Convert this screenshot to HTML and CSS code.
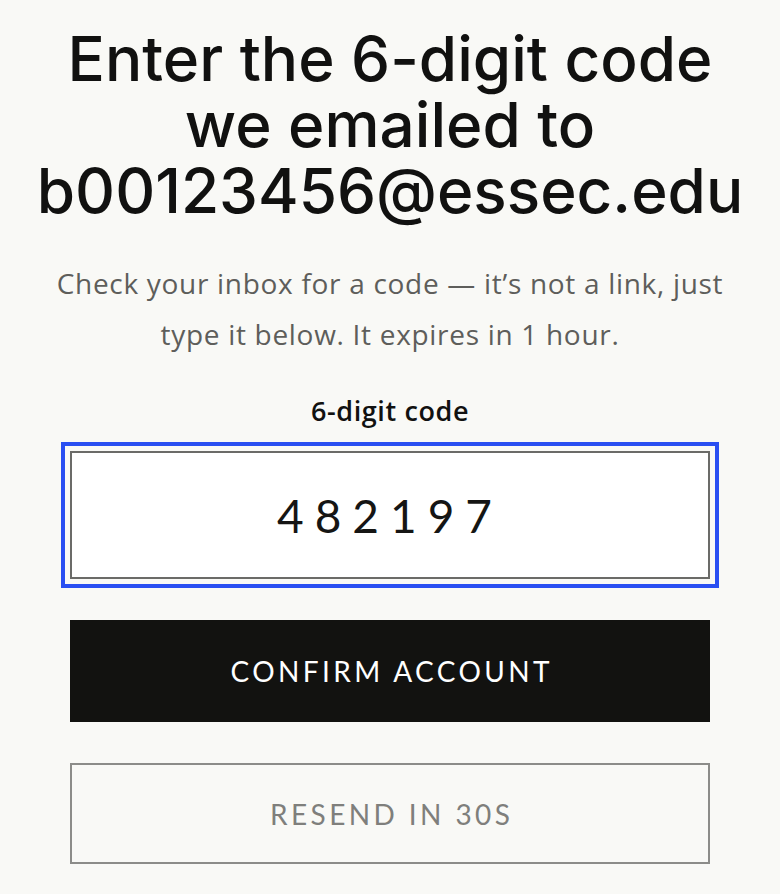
FILE: index.html
```html
<!DOCTYPE html>
<html lang="en">
<head>
<meta charset="utf-8">
<title>Enter code</title>
<link rel="stylesheet" href="styles.css">
</head>
<body>
<main class="page">
  <header class="intro">
    <h1 class="title">Enter the 6-digit code we emailed to b00123456@essec.edu</h1>
    <p class="lead">Check your inbox for a code — it’s not a link, just type it below. It expires in 1 hour.</p>
  </header>
  <form class="form">
    <label class="label" for="code">6-digit code</label>
    <input class="code is-focused" id="code" type="text" inputmode="numeric" value="482197">
    <button class="btn btn-primary" type="button">Confirm account</button>
    <button class="btn btn-secondary" type="button" disabled>Resend in 30s</button>
  </form>
</main>
</body>
</html>
```

FILE: styles.css
```css
html, body {
  margin: 0;
  padding: 0;
  background: #f9f9f6;
}
.page {
  display: flex;
  flex-direction: column;
  align-items: center;
  padding-top: 26px;
  font-family: "Open Sans", "Liberation Sans", sans-serif;
}
.intro {
  width: 740px;
  display: flex;
  flex-direction: column;
  align-items: center;
  text-align: center;
}
.title {
  margin: 0;
  max-width: 720px;
  font-family: "Inter", "Liberation Sans", sans-serif;
  font-weight: 500;
  font-size: 62px;
  line-height: 66px;
  letter-spacing: 0;
  color: #111110;
}
.lead {
  margin: 34px 0 0;
  max-width: 700px;
  font-size: 28px;
  line-height: 51px;
  letter-spacing: 0.7px;
  color: #5e5e5b;
}
.form {
  width: 640px;
  margin-top: 35px;
  display: flex;
  flex-direction: column;
  align-items: stretch;
}
.label {
  text-align: center;
  font-size: 27px;
  font-weight: 600;
  letter-spacing: 0.6px;
  color: #111110;
  line-height: 32px;
}
.code {
  box-sizing: border-box;
  margin-top: 24px;
  height: 128px;
  width: 100%;
  border: 2px solid #6b6b68;
  border-radius: 0;
  background: #ffffff;
  text-align: center;
  font-family: "Lato", "Liberation Sans", sans-serif;
  font-size: 46px;
  letter-spacing: 11px;
  padding: 0;
  color: #151514;
}
.code.is-focused {
  outline: 4px solid #2a4ff2;
  outline-offset: 5px;
}
.btn {
  box-sizing: border-box;
  width: 100%;
  border-radius: 0;
  font-family: "Lato", "Liberation Sans", sans-serif;
  font-size: 28px;
  text-transform: uppercase;
  letter-spacing: 3.4px;
  padding: 0 0 0 3.4px;
}
.btn-primary {
  margin-top: 41px;
  height: 102px;
  background: #121210;
  color: #ffffff;
  border: 1px solid #121210;
}
.btn-secondary {
  margin-top: 41px;
  height: 101px;
  background: transparent;
  color: #7f7f7c;
  border: 2px solid #8c8c89;
}
```
